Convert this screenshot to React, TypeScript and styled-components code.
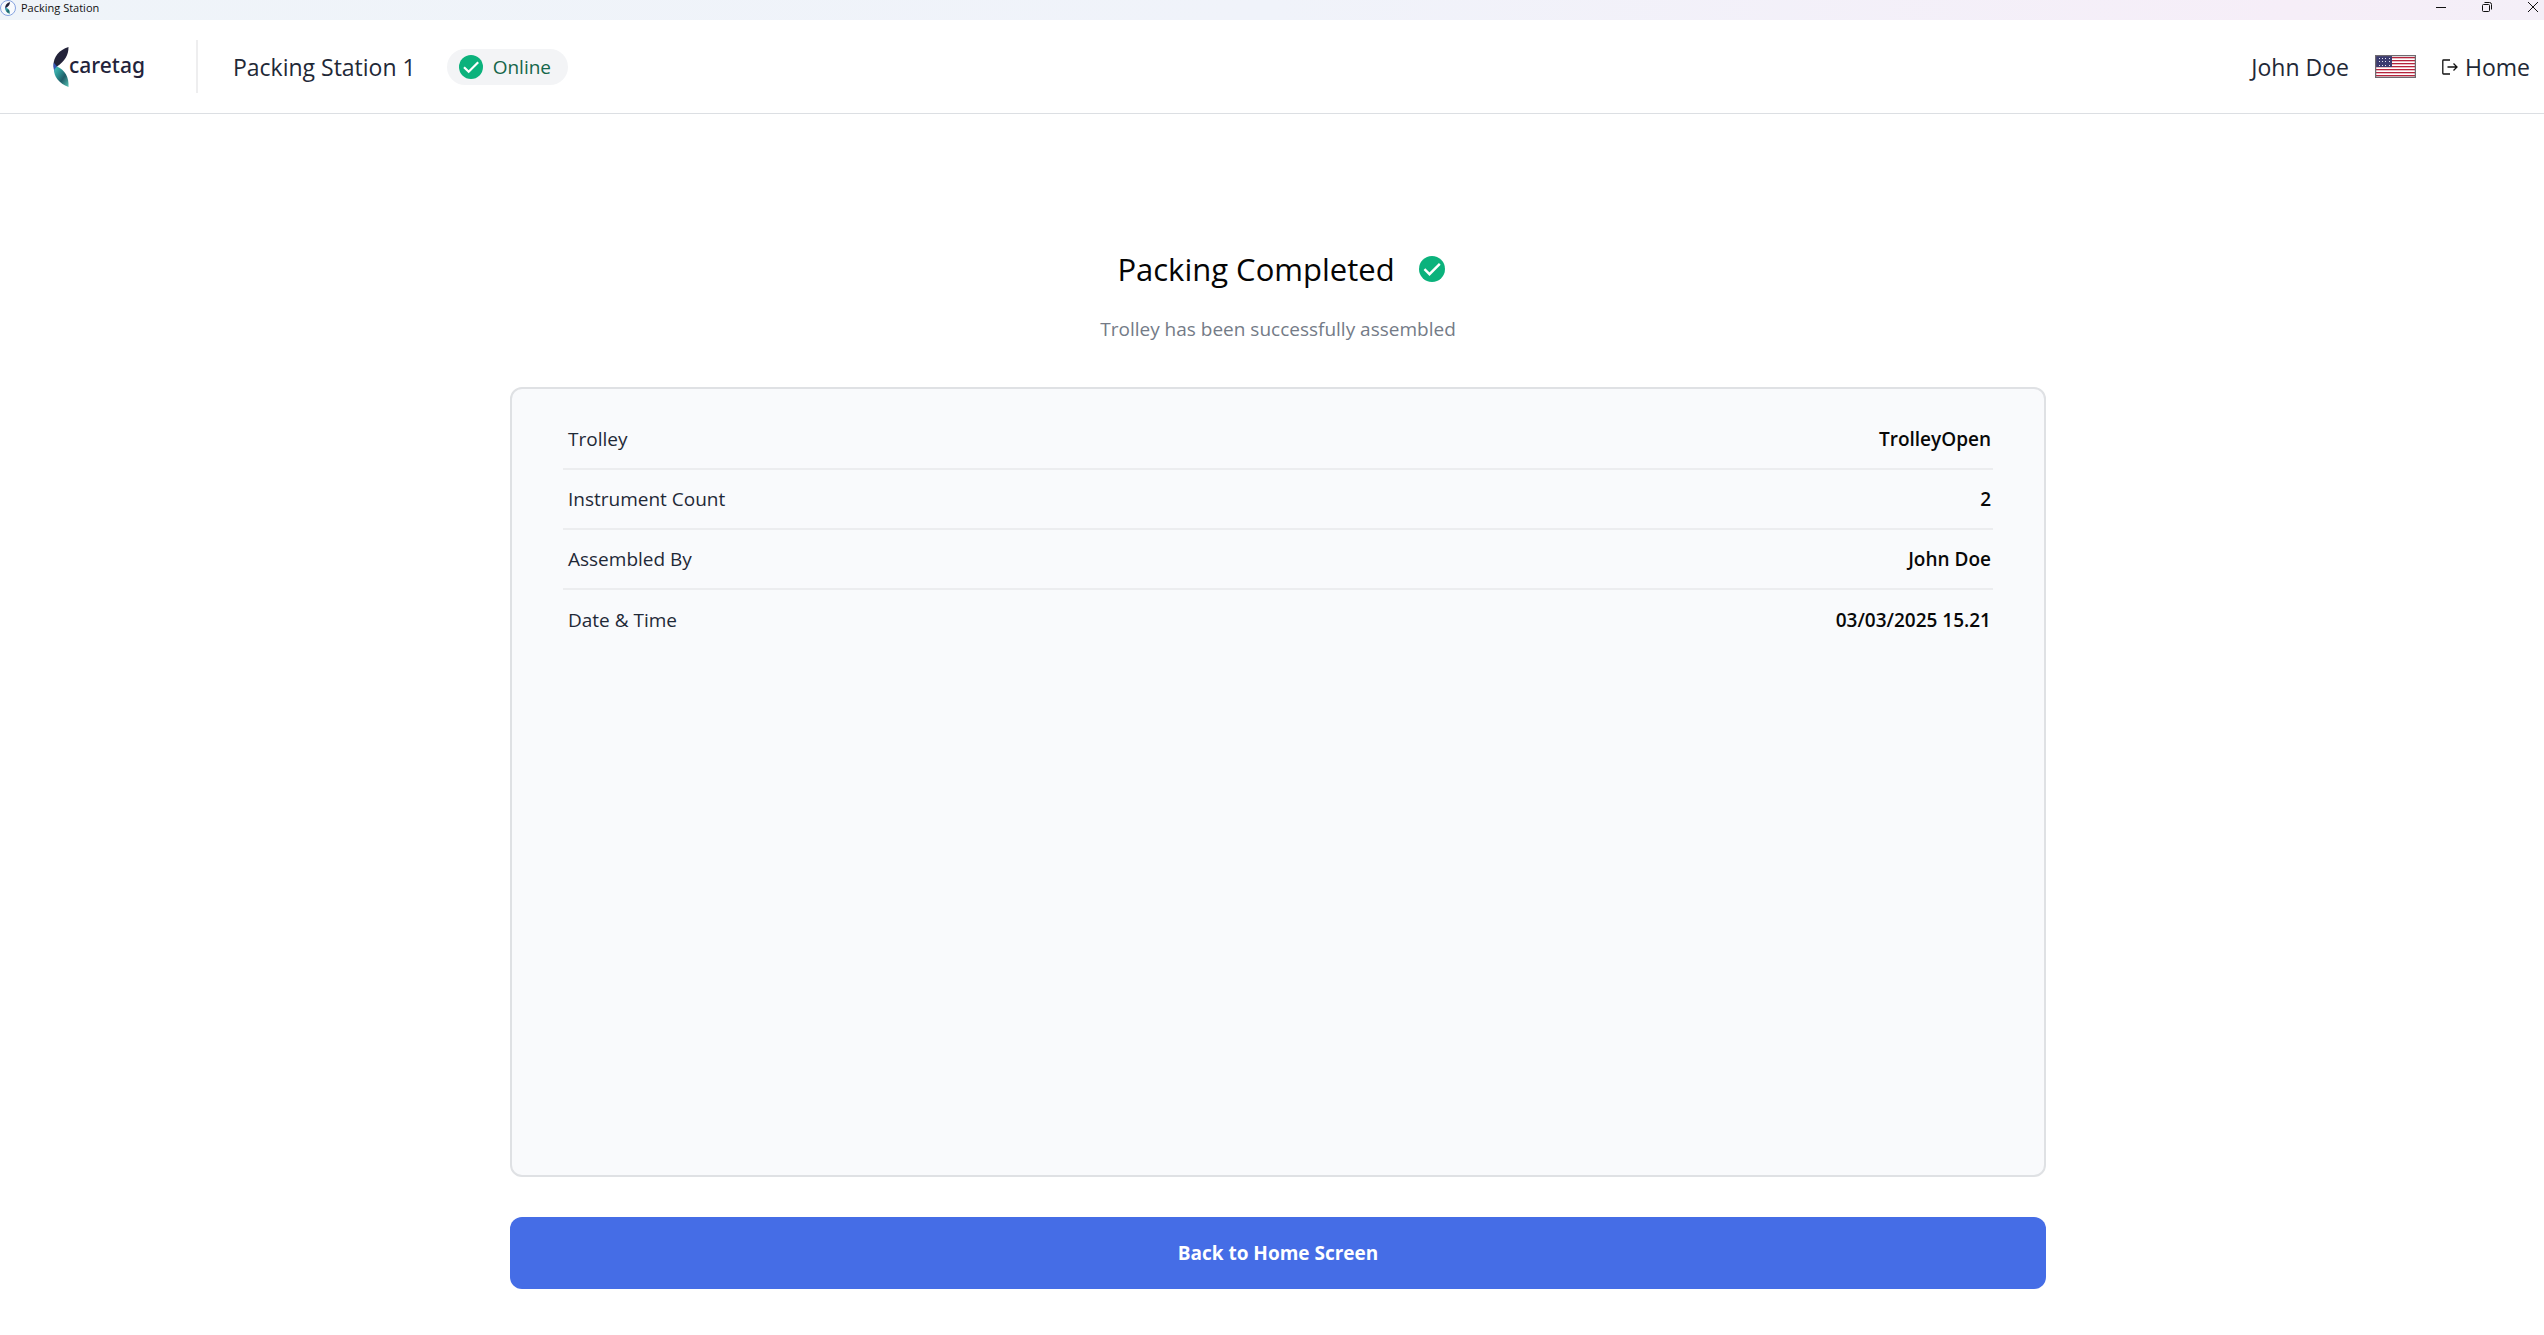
import React from "react";
import styled, { createGlobalStyle } from "styled-components";

const GlobalStyle = createGlobalStyle`
  *, *::before, *::after { box-sizing: border-box; }
  body {
    margin: 0;
    background: #ffffff;
    color: #1f2937;
    font-family: "Segoe UI", "Open Sans", "Noto Sans", sans-serif;
    font-size: 19px;
    line-height: 28px;
  }
`;

const Page = styled.div`
  display: flex;
  flex-direction: column;
  min-height: 100vh;
`;

const TitleBar = styled.div`
  display: flex;
  align-items: flex-start;
  justify-content: space-between;
  height: 20px;
  padding-right: 5px;
  background: linear-gradient(90deg, #eff4f9 0%, #f0f3fa 50%, #f6eef8 90%, #f4eff8 100%);
  color: #111111;
`;

const WindowTitle = styled.div`
  display: flex;
  align-items: center;
  gap: 5px;
  font-size: 11px;
  line-height: 16px;
`;

const WindowControls = styled.div`
  display: flex;
  gap: 34px;
`;

const WindowButton = styled.button`
  display: flex;
  padding: 1px 0 0;
  border: 0;
  background: none;
  color: #111111;
`;

const Header = styled.header`
  display: flex;
  align-items: center;
  justify-content: space-between;
  height: 94px;
  padding: 0 14px 0 53px;
  border-bottom: 1px solid #dcdfe3;
`;

const HeaderGroup = styled.div<{ $gap: number }>`
  display: flex;
  align-items: center;
  gap: ${(p) => p.$gap}px;
`;

const Logo = styled.a`
  display: flex;
  align-items: center;
  color: #23233a;
  text-decoration: none;
`;

const LogoText = styled.span`
  padding-bottom: 4px;
  font-family: "Noto Sans", sans-serif;
  font-size: 21px;
  font-weight: 500;
  line-height: 28px;
`;

const Station = styled.div`
  display: flex;
  align-items: center;
  gap: 31px;
  height: 53px;
  padding-left: 35px;
  border-left: 2px solid #eeeeef;
`;

const HeaderText = styled.span`
  font-size: 23px;
  line-height: 32px;
`;

const Status = styled.span`
  display: flex;
  align-items: center;
  gap: 10px;
  height: 36px;
  padding: 0 17px 0 12px;
  border-radius: 18px;
  background: #f3f4f6;
  color: #14664a;
`;

const FlagButton = styled.button`
  display: flex;
  padding: 0;
  border: 0;
  background: none;
`;

const HomeLink = styled.a`
  display: flex;
  align-items: center;
  gap: 7px;
  color: inherit;
  text-decoration: none;
`;

const Main = styled.main`
  display: flex;
  flex: 1;
  flex-direction: column;
  width: 100%;
  max-width: 1548px;
  margin: 0 auto;
  padding: 131px 0 46px 12px;
`;

const Intro = styled.div`
  display: flex;
  flex-direction: column;
  align-items: center;
  gap: 22px;
  padding-bottom: 44px;
`;

const Heading = styled.h1`
  display: flex;
  align-items: center;
  gap: 24px;
  margin: 0;
  padding-left: 6px;
  color: #050505;
  font-size: 31px;
  font-weight: 400;
  line-height: 48px;
`;

const Subtitle = styled.p`
  margin: 0;
  color: #747b87;
`;

const Card = styled.section`
  flex: 1;
  padding: 20px 51px;
  border: 2px solid #dfe1e4;
  border-radius: 12px;
  background: #f9fafc;
`;

const Details = styled.table`
  width: 100%;
  border-collapse: collapse;
`;

const Row = styled.tr`
  height: 60px;

  &:not(:last-child) {
    border-bottom: 2px solid #ecedef;
  }
`;

const Label = styled.th`
  padding: 0 5px;
  font-weight: 400;
  text-align: left;
`;

const Value = styled.td`
  padding: 0 2px;
  color: #080808;
  font-weight: 600;
  text-align: right;
`;

const PrimaryButton = styled.button`
  height: 72px;
  margin-top: 40px;
  border: 0;
  border-radius: 12px;
  background: #456de6;
  color: #ffffff;
  font: inherit;
  font-weight: 700;
`;

const CheckIcon = ({ size }: { size: number }) => (
  <svg width={size} height={size} viewBox="0 0 24 24" aria-hidden="true">
    <circle cx="12" cy="12" r="12" fill="#0bb27c" />
    <path d="M5 12.2 9.7 16.8 19.2 7.2" fill="none" stroke="#fff" strokeWidth="2.2" />
  </svg>
);

const Leaf = ({ id }: { id: string }) => (
  <>
    <defs>
      <linearGradient id={id} x1="0" y1="0" x2="1" y2="1">
        <stop offset="0" stopColor="#46c8c0" />
        <stop offset="0.35" stopColor="#2b8f90" />
        <stop offset="0.6" stopColor="#1f5d68" />
        <stop offset="1" stopColor="#55c4b4" />
      </linearGradient>
    </defs>
    <path d="M15.5 0C5 3.500 -.5 11 .8 20.500C1.500 21.500 3 20.500 4 19.500C12 14 15.500 8 15.500 0Z" fill="#23233a" />
    <path d="M.7 15.500C0 20 .7 24 2.500 27L4.500 20Z" fill="#3454b4" />
    <path d="M4 19.500C12 23 16 30 15.500 40C6 36.500 0 28.500 1.400 22.500Z" fill={`url(#${id})`} />
  </>
);

const AppIcon = () => (
  <svg width="16" height="16" viewBox="0 0 16 16" aria-hidden="true">
    <circle cx="8" cy="8" r="7.500" fill="#f8fafd" stroke="#86a3e0" />
    <g transform="translate(5 2) scale(.32 .3)">
      <Leaf id="leaf-small" />
    </g>
  </svg>
);

const Flag = () => (
  <svg width="41" height="23" viewBox="0 0 41 23" aria-hidden="true">
    <rect width="41" height="23" fill="#fff" />
    {[2, 5, 8, 11, 14, 17, 20].map((y) => (
      <rect key={y} x="1" y={y} width="39" height="1.300" fill="#b5243c" />
    ))}
    <rect x="1" y="1" width="16" height="11" fill="#3b3b70" />
    {[3, 6, 10].map((y) =>
      [4, 7, 10, 14].map((x) => (
        <rect key={`${x}-${y}`} x={x} y={y} width="1" height="1" fill="#e4e4f0" />
      ))
    )}
    <rect x=".5" y=".5" width="40" height="22" fill="none" stroke="#6f6a70" strokeWidth="1.500" />
  </svg>
);

const ExitIcon = () => (
  <svg width="16" height="16" viewBox="0 0 16 16" fill="none" stroke="#111" strokeWidth="1.300" aria-hidden="true">
    <path d="M8 1H1.500Q.8 1 .8 1.700V14.300Q.8 15 1.500 15H8M5.500 8H15M11.500 4.500 15 8 11.500 11.500" />
  </svg>
);

const details = [
  ["Trolley", "TrolleyOpen"],
  ["Instrument Count", "2"],
  ["Assembled By", "John Doe"],
  ["Date & Time", "03/03/2025 15.21"],
];

export default function App() {
  return (
    <Page>
      <GlobalStyle />
      <TitleBar>
        <WindowTitle>
          <AppIcon />
          Packing Station
        </WindowTitle>
        <WindowControls>
          <WindowButton aria-label="Minimize">
            <svg width="12" height="12" viewBox="0 0 12 12" stroke="currentColor"><path d="M1 6.500H11" /></svg>
          </WindowButton>
          <WindowButton aria-label="Restore">
            <svg width="12" height="12" viewBox="0 0 12 12" fill="none" stroke="currentColor">
              <rect x="1.500" y="3.500" width="7" height="7" rx="1" />
              <path d="M3.500 1.500H8.500Q10.500 1.500 10.500 3.500V8.500" />
            </svg>
          </WindowButton>
          <WindowButton aria-label="Close">
            <svg width="12" height="12" viewBox="0 0 12 12" stroke="currentColor"><path d="M1 1 11 11M11 1 1 11" /></svg>
          </WindowButton>
        </WindowControls>
      </TitleBar>
      <Header>
        <HeaderGroup $gap={51}>
          <Logo href="#" aria-label="caretag">
            <svg width="16" height="40" viewBox="0 0 16 40" aria-hidden="true">
              <Leaf id="leaf-large" />
            </svg>
            <LogoText>caretag</LogoText>
          </Logo>
          <Station>
            <HeaderText>Packing Station 1</HeaderText>
            <Status>
              <CheckIcon size={24} />
              Online
            </Status>
          </Station>
        </HeaderGroup>
        <HeaderGroup $gap={26}>
          <HeaderText>John Doe</HeaderText>
          <FlagButton aria-label="Language: English (US)">
            <Flag />
          </FlagButton>
          <HomeLink href="#">
            <ExitIcon />
            <HeaderText>Home</HeaderText>
          </HomeLink>
        </HeaderGroup>
      </Header>
      <Main>
        <Intro>
          <Heading>
            Packing Completed
            <CheckIcon size={26} />
          </Heading>
          <Subtitle>Trolley has been successfully assembled</Subtitle>
        </Intro>
        <Card>
          <Details>
            <tbody>
              {details.map(([label, value]) => (
                <Row key={label}>
                  <Label scope="row">{label}</Label>
                  <Value>{value}</Value>
                </Row>
              ))}
            </tbody>
          </Details>
        </Card>
        <PrimaryButton type="button">Back to Home Screen</PrimaryButton>
      </Main>
    </Page>
  );
}
